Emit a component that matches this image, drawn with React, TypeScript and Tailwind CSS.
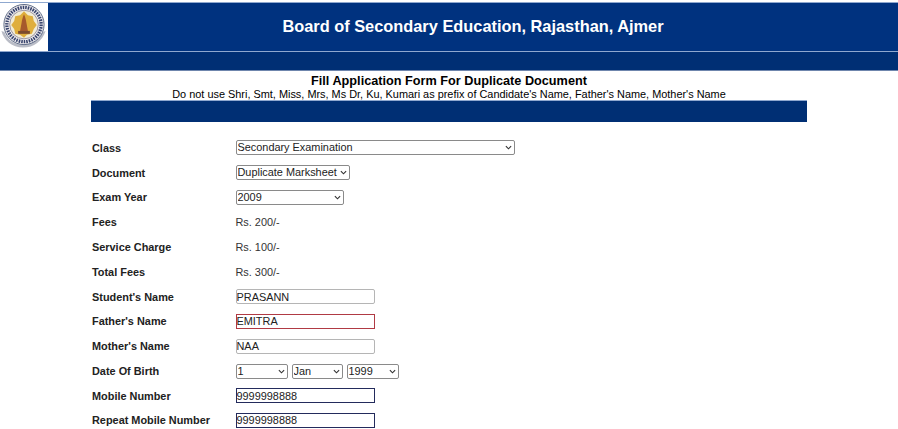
import React from "react";

function Seal() {
  return (
    <svg viewBox="1 2.500 48 49" className="w-[48px] h-[48px]">
      <path d="M2 31c2 9 11 17 22 17s20-7 23-17l-3 1c-3 8-11 13-20 13S8 40 5 32z" fill="#b9bcc6" />
      <circle cx="25" cy="24.500" r="20.500" fill="#eceaec" stroke="#5d6a86" strokeWidth="1" />
      <circle cx="25" cy="24.500" r="17.500" fill="none" stroke="#39456e" strokeWidth="3.400" strokeDasharray="1.600 1" />
      <circle cx="25" cy="24.500" r="14.600" fill="#f1ecd6" stroke="#77708a" strokeWidth="0.700" />
      <path d="M25 11l4 4 5 1 1 5 3 4-3 4-2 5-5 1-3 3-4-3-5-1-1-5-3-4 3-4 1-5 5-1z" fill="#dfae3c" />
      <path d="M25 14c1.500 3 2 6 2.500 9l1.500 8h-8l1.500-8c.5-3 1-6 2.500-9z" fill="#a65a2c" />
      <path d="M19 31h12v3H19z" fill="#7c4b2d" />
    </svg>
  );
}

function Dropdown({ value, width }: { value: string; width: string }) {
  return (
    <div className={`relative h-[15px] ${width}`}>
      <select
        defaultValue={value}
        className="appearance-none block w-full h-full border border-[#8a8a8a] rounded-[2px] bg-white pl-[1px] text-[10.9px] leading-none text-[#222]"
      >
        <option>{value}</option>
      </select>
      <svg
        viewBox="0 0 8 5"
        className="absolute right-[3px] top-[5px] w-[7px] h-[5px] pointer-events-none"
        fill="none"
        stroke="#333"
        strokeWidth="1.300"
      >
        <path d="M1 1l3 3 3-3" />
      </svg>
    </div>
  );
}

function Field({ value, border }: { value: string; border: string }) {
  return (
    <input
      readOnly
      value={value}
      className={`w-[139px] h-[15px] border text-[10.9px] text-[#222] ${border}`}
    />
  );
}

function Row({ label, children }: { label: string; children: React.ReactNode }) {
  return (
    <div className="flex items-center h-[24.8px]">
      <div className="w-[143.5px] shrink-0 text-[10.9px] font-bold text-[#222]">{label}</div>
      <div className="flex items-center gap-[4px] text-[10.9px] text-[#333]">{children}</div>
    </div>
  );
}

export default function App() {
  return (
    <div className="w-[898px] h-[429px] overflow-hidden bg-white font-['Liberation_Sans',Arial,sans-serif]">
      {/* Header */}
      <div className="pt-[2px]">
        <div className="flex h-[49px] bg-[#00327f] border-t border-[#8fa8cf]">
          <div className="w-[48px] bg-white shrink-0">
            <Seal />
          </div>
          <h1 className="flex-1 pt-[12px] text-center text-[16.36px] leading-[22px] font-bold text-white">
            Board of Secondary Education, Rajasthan, Ajmer
          </h1>
        </div>
        <div className="h-[1px] bg-[#8fa8cf]" />
        <div className="h-[19px] bg-[#002f74] border-b border-[#6f86ad]" />
      </div>

      {/* Heading */}
      <div className="pt-[3px] text-center text-black">
        <h2 className="text-[12.7px] leading-[14px] font-bold">Fill Application Form For Duplicate Document</h2>
        <p className="text-[10.92px] leading-[12px]">
          Do not use Shri, Smt, Miss, Mrs, Ms Dr, Ku, Kumari as prefix of Candidate's Name, Father's Name, Mother's Name
        </p>
      </div>

      {/* Form */}
      <div className="ml-[91px] w-[716px]">
        <div className="h-[22px] bg-[#002f74] border-t border-[#8fa8cf]" />
        <div className="pl-[1px] pt-[13.5px]">
          <Row label="Class">
            <Dropdown value="Secondary Examination" width="w-[279px]" />
          </Row>
          <Row label="Document">
            <Dropdown value="Duplicate Marksheet" width="w-[114px]" />
          </Row>
          <Row label="Exam Year">
            <Dropdown value="2009" width="w-[108px]" />
          </Row>
          <Row label="Fees">Rs. 200/-</Row>
          <Row label="Service Charge">Rs. 100/-</Row>
          <Row label="Total Fees">Rs. 300/-</Row>
          <Row label="Student's Name">
            <Field value="PRASANN" border="border-[#b5b5b5] rounded-[2px]" />
          </Row>
          <Row label="Father's Name">
            <Field value="EMITRA" border="border-[#b03a44]" />
          </Row>
          <Row label="Mother's Name">
            <Field value="NAA" border="border-[#b5b5b5] rounded-[2px]" />
          </Row>
          <Row label="Date Of Birth">
            <Dropdown value="1" width="w-[52px]" />
            <Dropdown value="Jan" width="w-[51px]" />
            <Dropdown value="1999" width="w-[52px]" />
          </Row>
          <Row label="Mobile Number">
            <Field value="9999998888" border="border-[#232b5c]" />
          </Row>
          <Row label="Repeat Mobile Number">
            <Field value="9999998888" border="border-[#232b5c]" />
          </Row>
        </div>
      </div>
    </div>
  );
}
